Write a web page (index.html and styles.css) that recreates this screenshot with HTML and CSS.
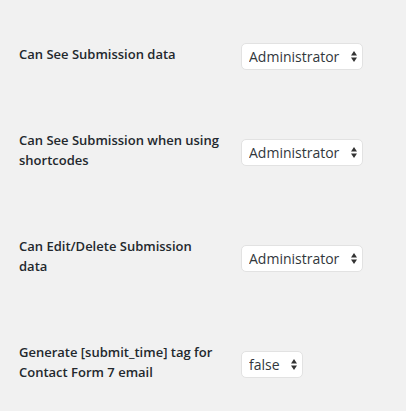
FILE: index.html
```html
<!DOCTYPE html>
<html lang="en">
<head>
    <meta charset="UTF-8">
    <meta name="viewport" content="width=device-width, initial-scale=1.0">
    <title>Options - Contact Form DB</title>
    <link rel="stylesheet" href="styles.css">
</head>
<body>
    <div class="options">
        <div class="option-row">
            <label class="option-label" for="can-see">Can See Submission data</label>
            <div class="option-field">
                <span class="select-wrap">
                    <select id="can-see" class="option-select">
                        <option>Administrator</option>
                    </select>
                    <svg class="select-arrows" width="6" height="11" viewBox="0 0 6 11"><path d="M3 0 L6 4.5 L0 4.5 Z M0 6.5 L6 6.5 L3 11 Z" fill="#333"/></svg>
                </span>
            </div>
        </div>

        <div class="option-row">
            <label class="option-label" for="can-see-short">Can See Submission when using shortcodes</label>
            <div class="option-field">
                <span class="select-wrap">
                    <select id="can-see-short" class="option-select">
                        <option>Administrator</option>
                    </select>
                    <svg class="select-arrows" width="6" height="11" viewBox="0 0 6 11"><path d="M3 0 L6 4.5 L0 4.5 Z M0 6.5 L6 6.5 L3 11 Z" fill="#333"/></svg>
                </span>
            </div>
        </div>

        <div class="option-row">
            <label class="option-label" for="can-edit">Can Edit/Delete Submission data</label>
            <div class="option-field">
                <span class="select-wrap">
                    <select id="can-edit" class="option-select">
                        <option>Administrator</option>
                    </select>
                    <svg class="select-arrows" width="6" height="11" viewBox="0 0 6 11"><path d="M3 0 L6 4.5 L0 4.5 Z M0 6.5 L6 6.5 L3 11 Z" fill="#333"/></svg>
                </span>
            </div>
        </div>

        <div class="option-row">
            <label class="option-label" for="submit-time">Generate [submit_time] tag for Contact Form 7 email</label>
            <div class="option-field">
                <span class="select-wrap">
                    <select id="submit-time" class="option-select">
                        <option>false</option>
                    </select>
                    <svg class="select-arrows" width="6" height="11" viewBox="0 0 6 11"><path d="M3 0 L6 4.5 L0 4.5 Z M0 6.5 L6 6.5 L3 11 Z" fill="#333"/></svg>
                </span>
            </div>
        </div>
    </div>
</body>
</html>
```

FILE: styles.css
```css
body {
    font-family: 'Open Sans', 'Noto Sans', sans-serif;
    margin: 0;
    padding: 0;
    background-color: #f1f1f1;
    color: #23282d;
}

.options {
    padding: 13px 0 0 19px;
}

.option-row {
    display: grid;
    grid-template-columns: 203px auto;
    column-gap: 19px;
}

.option-label {
    font-size: 13px;
    font-weight: 600;
    line-height: 20px;
    padding: 31px 0 35px 0;
}

.option-field {
    align-self: center;
}

.select-wrap {
    position: relative;
    display: inline-block;
}

.option-select {
    -webkit-appearance: none;
    appearance: none;
    font-family: 'Open Sans', 'Noto Sans', sans-serif;
    font-size: 14px;
    color: #32373c;
    background-color: #fff;
    border: 1px solid #e2e2e2;
    border-radius: 5px;
    height: 27px;
    line-height: 25px;
    padding: 0 22px 0 7px;
    margin: 0;
}

.select-arrows {
    position: absolute;
    right: 6px;
    top: 8px;
    pointer-events: none;
}
```
